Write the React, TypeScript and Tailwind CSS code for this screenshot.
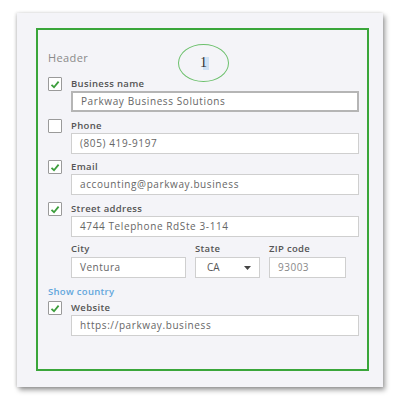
import React from "react"

const font = { fontFamily: '"Open Sans", "Liberation Sans", sans-serif' }

// Small checkbox with a green tick
const Check = ({ checked }: { checked: boolean }) => (
  <div className="w-[14px] h-[14px] bg-white border border-[#9a9a9a] rounded-[1px] flex items-center justify-center shrink-0">
    {checked && (
      <svg width="10" height="9" viewBox="0 0 10 9">
        <path d="M1.5 4.8 L4 7.2 L8.6 1.6" fill="none" stroke="#3c9e3c" strokeWidth="1.8" />
      </svg>
    )}
  </div>
)

interface FieldProps {
  label: string
  value: string
  checked: boolean
  focused?: boolean
  className?: string
}

const Field = ({ label, value, checked, focused, className }: FieldProps) => (
  <div className={className}>
    <div className="flex items-center h-[14px]">
      <Check checked={checked} />
      <span className="ml-[9px] text-[9.5px] font-semibold text-[#555] tracking-[0.35px]">{label}</span>
    </div>
    <div
      className={
        "ml-[23px] w-[288px] h-[21px] bg-white flex items-center pl-[8px] text-[10px] text-[#666] tracking-[0.6px] " +
        (focused ? "border-2 border-[#b5b5b5]" : "border border-[#cfcfcf]")
      }
    >
      {value}
    </div>
  </div>
)

export default function App() {
  return (
    <div className="w-[400px] h-[401px] bg-white pt-[13px] pl-[17px]" style={font}>
      <div className="w-[366px] h-[374px] bg-[#f4f4f8] shadow-[2px_3px_5px_rgba(0,0,0,0.4),-1px_0_3px_rgba(0,0,0,0.15)] pt-[15px] pl-[19px]">
        <div className="relative w-[333px] h-[343px] border-2 border-[#3aa63a] pl-[10px] pt-[21px]">
          {/* callout marker */}
          <div className="absolute left-[140px] top-[14px] w-[51px] h-[38px] rounded-[50%] border border-[#6cc06c] flex items-center justify-center">
            <span
              className="relative text-[14px] text-[#333] leading-none"
              style={{ fontFamily: '"Liberation Serif", serif' }}
            >
              <span className="absolute left-[3px] top-[1px] w-[6px] h-[13px] bg-[#cfe2f5]" />
              <span className="relative">1</span>
            </span>
          </div>

          <div className="text-[11px] text-[#8a8a8a] tracking-[0.4px] leading-[14px]">Header</div>

          <Field className="mt-[12px]" label="Business name" value="Parkway Business Solutions" checked focused />
          <Field className="mt-[7px]" label="Phone" value="(805) 419-9197" checked={false} />
          <Field className="mt-[6px]" label="Email" value="accounting@parkway.business" checked />
          <Field className="mt-[7px]" label="Street address" value="4744 Telephone RdSte 3-114" checked />

          <div className="ml-[23px] mt-[4px] flex gap-[9px]">
            <div className="w-[115px]">
              <div className="text-[9.5px] font-semibold text-[#555] leading-[15px] tracking-[0.3px]">City</div>
              <div className="mt-[1px] h-[21px] bg-white border border-[#cfcfcf] flex items-center pl-[8px] text-[10px] text-[#666] tracking-[0.5px]">
                Ventura
              </div>
            </div>
            <div className="w-[65px]">
              <div className="text-[9.5px] font-semibold text-[#555] leading-[15px] tracking-[0.3px]">State</div>
              <div className="mt-[1px] h-[21px] bg-white border border-[#cfcfcf] flex items-center justify-between pl-[11px] pr-[8px] text-[10px] text-[#555]">
                <span>CA</span>
                <svg width="7" height="4" viewBox="0 0 7 4">
                  <path d="M0 0 H7 L3.5 4 Z" fill="#444" />
                </svg>
              </div>
            </div>
            <div className="w-[77px]">
              <div className="text-[9.5px] font-semibold text-[#555] leading-[15px] tracking-[0.3px]">ZIP code</div>
              <div className="mt-[1px] h-[21px] bg-white border border-[#cfcfcf] flex items-center pl-[8px] text-[10px] text-[#888] tracking-[0.5px]">
                93003
              </div>
            </div>
          </div>

          <div className="mt-[7px] text-[9.5px] font-semibold text-[#62a6dc] leading-[14px] tracking-[0.3px]">Show country</div>
          <Field className="mt-[2px]" label="Website" value="https://parkway.business" checked />
        </div>
      </div>
    </div>
  )
}
